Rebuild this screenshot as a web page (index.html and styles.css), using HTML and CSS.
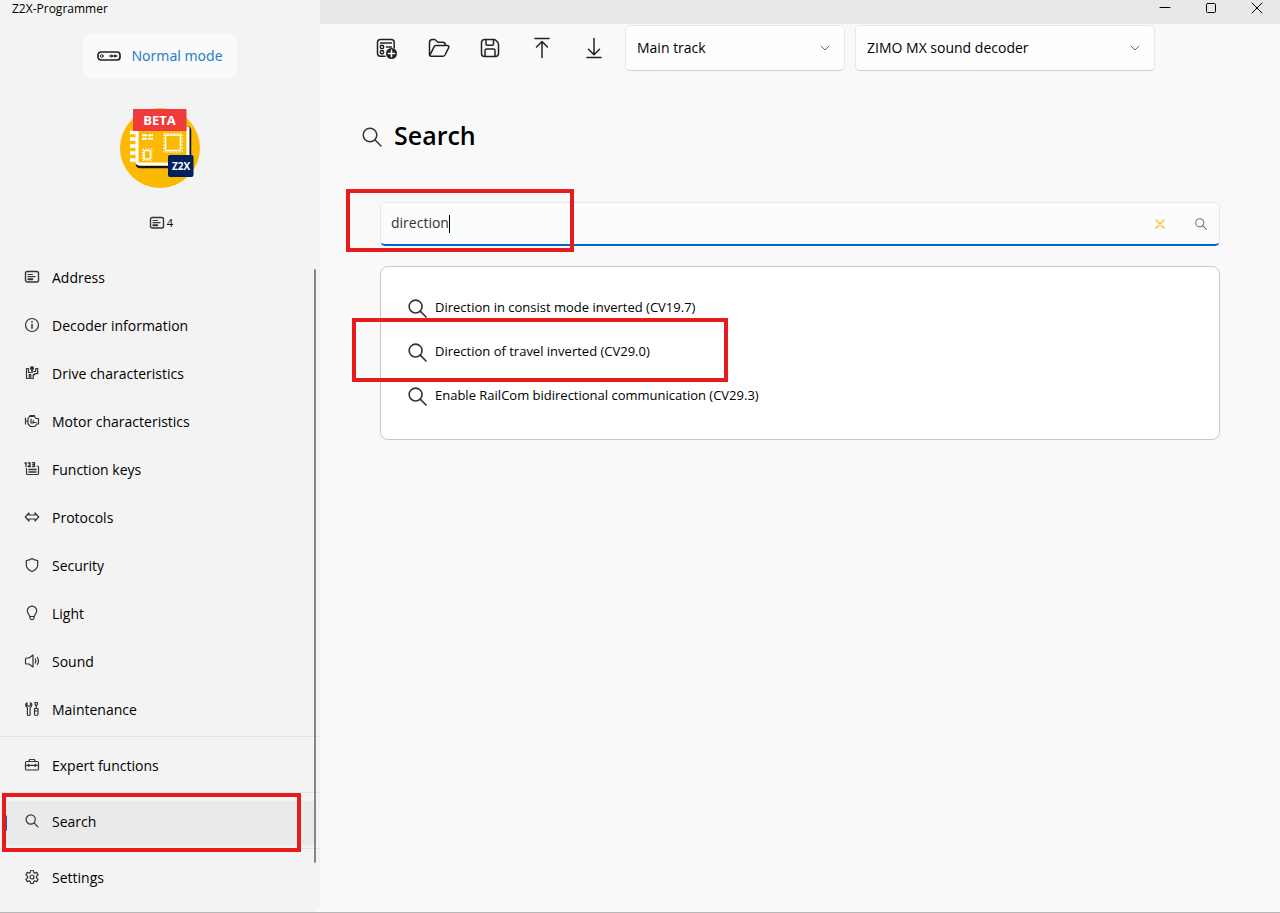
FILE: index.html
```html
<!DOCTYPE html>
<html lang="en">
<head>
<meta charset="utf-8">
<meta name="viewport" content="width=device-width, initial-scale=1">
<title>Z2X-Programmer</title>
<link rel="stylesheet" href="styles.css">
</head>
<body>
<svg class="sprite" aria-hidden="true">
  <symbol id="i-search" viewBox="0 0 20 20"><circle cx="8" cy="8" r="6.8"/><path d="M12.8 12.8 19 19"/></symbol>
  <symbol id="i-card" viewBox="0 0 16 16"><rect x="1.500" y="2.500" width="13" height="10.500" rx="1.800" stroke-width="1.400"/><path d="M4 5.500h4.500M4 7.700h7"/><path d="M4.300 10.300h4" stroke-width="2"/></symbol>
  <symbol id="i-chevron" viewBox="0 0 10 6"><path d="m1 1 4 4 4-4"/></symbol>
</svg>
<div class="app">
  <aside class="sidebar">
    <div class="app-title">Z2X-Programmer</div>
    <button class="mode" type="button">
      <svg class="mode-icon" viewBox="0 0 24 10"><rect x="1" y="1" width="22" height="8" rx="3" stroke-width="1.700"/><circle cx="4.800" cy="5" r="1.400"/><circle cx="14.500" cy="5" r="1"/><circle cx="18.300" cy="5" r="1"/><path d="M12.500 5h7.500"/></svg>
      Normal mode
    </button>
    <svg class="logo" viewBox="0 0 80 80" role="img" aria-label="Z2X beta logo">
      <circle cx="40" cy="40" r="40" fill="#fbba00"/>
      <path d="M17 56.500c0 1.500 1.500 2.500 3 2.500h47c2 0 3-1 3-3V22c0-1.500-.5-2-1.500-2.500" fill="none" stroke="#111" stroke-width="2.500"/>
      <path d="M17 22v31.500a2.500 2.500 0 0 0 2.500 2.500H66a2 2 0 0 0 2-2V20" fill="none" stroke="#fff" stroke-width="3"/>
      <path d="M10 24.500h7M10 31h7M10 38h7M10 45h7M10 52h7" stroke="#fff" stroke-width="3.500" stroke-linecap="butt"/>
      <path d="M22 27.300h11M22 30.800h11" stroke="#fff" stroke-width="2" stroke-dasharray="5 1" stroke-linecap="butt"/>
      <rect x="45.500" y="27" width="15" height="15.500" rx="1" fill="none" stroke="#fff" stroke-width="1.500"/>
      <rect x="44" y="25.500" width="18" height="18.500" fill="none" stroke="#fff" stroke-width="1.500" stroke-dasharray="1.300 1.900" stroke-linecap="butt"/>
      <rect x="24" y="42.500" width="6.500" height="8.500" rx="1" fill="none" stroke="#fff" stroke-width="1.500"/>
      <rect x="22.700" y="41.200" width="9.100" height="11.100" fill="none" stroke="#fff" stroke-width="1.300" stroke-dasharray="1.200 1.600" stroke-linecap="butt"/>
      <rect x="13" y="1" width="53.500" height="22" fill="#ef3c3a"/>
      <rect x="48" y="47" width="25.500" height="22" rx="2" fill="#00215f"/>
      <text class="logo-beta" x="39.500" y="17">BETA</text>
      <text class="logo-z2x" x="61" y="62">Z2X</text>
    </svg>
    <div class="count"><svg class="icon"><use href="#i-card"/></svg>4</div>
    <nav class="nav">
      <a class="item" href="#"><svg class="icon"><use href="#i-card"/></svg>Address</a>
      <a class="item" href="#"><svg class="icon" viewBox="0 0 16 16"><circle cx="8" cy="8" r="6.500"/><path d="M8 7.200v4M8 4.500v.5" stroke-width="1.500"/></svg>Decoder information</a>
      <a class="item" href="#"><svg class="icon" viewBox="0 0 16 16"><path d="M4.500 3.500H2.500v10h2.800v-3.800h1.500v3.800h2.400V9.700h1.500v-1h3V3.500h-2v3H9.500M4.500 3.500v4h2"/><circle cx="8" cy="3.300" r="1.500" fill="currentColor"/><path d="M8 3v4.500" stroke-width="1.500"/></svg>Drive characteristics</a>
      <a class="item" href="#"><svg class="icon" viewBox="0 0 16 16"><path d="M5.500 3.500h5l1.500 2h2.500v5.500H12.700l-1.700 2.500H6.500L4 11V5.500l1.500-2M6 2.500h4.500M1.500 5v6M1.500 8H4M7 6v4h2.200V7.500M9.200 9.500H12"/></svg>Motor characteristics</a>
      <a class="item" href="#"><svg class="icon" viewBox="0 0 16 16"><path d="M2.500 7.500v4.700c0 .8.500 1.300 1.300 1.300h9.400c.8 0 1.300-.5 1.300-1.300V6.500c0-.8-.5-1.500-1.300-1.500"/><path d="M5 8.500h7M5 11h7" stroke-width="1.600"/><path d="m1 2.300 1-.8v4.200M4.200 2h2v1.500L4.200 5.500h2.300M8.500 1.700h2v3.800h-2M8.800 3.500h1.700" stroke-width="1.300"/></svg>Function keys</a>
      <a class="item" href="#"><svg class="icon" viewBox="0 0 16 16"><path d="M5 4 1.300 8 5 12v-2h6v2l3.700-4L11 4v2H5V4Z"/></svg>Protocols</a>
      <a class="item" href="#"><svg class="icon" viewBox="0 0 16 16"><path d="M8 1.500c1.700 1.300 3.500 1.900 5.700 2v4.300c0 3.200-2 5.300-5.700 6.700-3.700-1.400-5.700-3.500-5.700-6.700V3.500c2.200-.1 4-.7 5.700-2Z"/></svg>Security</a>
      <a class="item" href="#"><svg class="icon" viewBox="0 0 16 16"><path d="M5.700 11.200C5.300 9.400 3.300 8.500 3.300 5.800a4.700 4.700 0 0 1 9.400 0c0 2.700-2 3.600-2.400 5.400l-.5 2.500c-.1.500-.4.800-.9.800H7.100c-.5 0-.8-.3-.9-.8l-.5-2.500ZM5.800 11.500h4.400"/></svg>Light</a>
      <a class="item" href="#"><svg class="icon" viewBox="0 0 16 16"><path d="M9 2v12l-4-3H2.500c-.7 0-1-.4-1-1V6c0-.6.300-1 1-1H5l4-3ZM11.300 6c.8 1.300.8 2.700 0 4M13.300 4.500c1.600 2.300 1.600 4.700 0 7"/></svg>Sound</a>
      <a class="item" href="#"><svg class="icon" viewBox="0 0 16 16"><path d="M3 1.800C1.300 2.500 1 5.500 3.400 6.700v6.500c0 1.700 2.700 1.700 2.700 0V6.700C8.600 5.500 8.200 2.500 6.500 1.800v2.700L4.800 5.300 3 4.500V1.800ZM10.500 7.500h3.500v5.500c0 2-3.500 2-3.500 0V7.500ZM12.200 7.500V4.500M11 1.500h2.400V3l-.6 1.500h-1.200L11 3V1.500ZM10.700 10h3"/></svg>Maintenance</a>
      <hr class="rule">
      <a class="item" href="#"><svg class="icon" viewBox="0 0 16 16"><path d="M5.200 4.500V3.300c0-.5.300-.8.800-.8h4c.5 0 .8.300.8.800v1.200M2.800 4.500h10.400c.8 0 1.300.5 1.300 1.300v5.900c0 .8-.5 1.300-1.300 1.300H2.800c-.8 0-1.300-.5-1.300-1.300V5.800c0-.8.500-1.300 1.300-1.300ZM1.500 8.300h13M4.700 7.200v2.300M11.300 7.200v2.300"/></svg>Expert functions</a>
      <hr class="rule">
      <a class="item current" href="#" aria-current="page"><svg class="icon" viewBox="0 0 16 16"><circle cx="6.700" cy="6.500" r="4.600"/><path d="m10 9.800 4 4"/></svg>Search<span class="mark mark-nav"></span></a>
      <hr class="rule">
      <a class="item" href="#"><svg class="icon" viewBox="0 0 16 16"><path d="M6.700 1.500h2.600l.4 2 1.100.6 1.900-.7 1.400 2.300-1.600 1.400v1.800l1.600 1.400-1.400 2.300-1.900-.7-1.100.6-.4 2H6.700l-.4-2-1.100-.6-1.900.7-1.400-2.300 1.600-1.400V7.100L1.900 5.700l1.400-2.300 1.900.7 1.100-.6.400-2Z"/><circle cx="8" cy="8" r="2"/></svg>Settings</a>
      <span class="scrollbar"></span>
    </nav>
  </aside>
  <main class="main">
    <header class="titlebar">
      <button type="button" aria-label="Minimize"><svg viewBox="0 0 12 12"><path d="M1 5.500h10"/></svg></button>
      <button type="button" aria-label="Maximize"><svg viewBox="0 0 12 12"><rect x="1.500" y="1.500" width="9" height="9" rx="1"/></svg></button>
      <button type="button" aria-label="Close"><svg viewBox="0 0 12 12"><path d="m1 1 10 10M11 1 1 11"/></svg></button>
    </header>
    <div class="toolbar">
      <button type="button" aria-label="New"><svg viewBox="0 0 24 24"><path d="M11 20.300H6.500A3 3 0 0 1 3.500 17.500v-11a3 3 0 0 1 3-3h10.700a3 3 0 0 1 3 3V12M6.500 7h11M12.500 11h5"/><circle cx="8" cy="11" r="1.700"/><circle cx="8" cy="16.300" r="1.700"/><circle cx="17.500" cy="17.500" r="5.500" fill="currentColor" stroke="none"/><path d="M17.500 14.300v6.400M14.300 17.500h6.400" stroke="#fff"/></svg></button>
      <button type="button" aria-label="Open"><svg viewBox="0 0 24 24"><path d="M3.500 19V6.500a3 3 0 0 1 3-3h2.300l3.200 2.700h4.700a2.500 2.500 0 0 1 2.500 2.500v.8M3.800 19.500 8 10.800c.4-.8 1-1.300 2-1.300h11.300c1.300 0 2 1.200 1.300 2.300L19 19c-.5.900-1.200 1.300-2.200 1.300H5.500c-1.200 0-2-.5-2-1.500"/></svg></button>
      <button type="button" aria-label="Save"><svg viewBox="0 0 24 24"><path d="M6.500 3.500h9.300c.8 0 1.500.3 2 .8l1.900 1.900c.5.500.8 1.200.8 2v9.300a3 3 0 0 1-3 3h-11a3 3 0 0 1-3-3v-11a3 3 0 0 1 3-3ZM8 3.500V8c0 .7.500 1.200 1.200 1.200h5.100c.7 0 1.200-.5 1.200-1.200V3.500M7 20.500v-6c0-.8.600-1.500 1.500-1.500h7c.9 0 1.500.7 1.500 1.500v6"/></svg></button>
      <button type="button" aria-label="Upload"><svg viewBox="0 0 24 24"><path d="M5 2.500h14M12 21.500V5.800M6.500 11 12 5.500l5.500 5.500"/></svg></button>
      <button type="button" aria-label="Download"><svg viewBox="0 0 24 24"><path d="M5 21.500h14M12 2.500v16M6.500 13.300l5.500 5.500 5.500-5.500"/></svg></button>
      <label class="picker picker-track"><select aria-label="Track"><option>Main track</option></select><svg><use href="#i-chevron"/></svg></label>
      <label class="picker picker-decoder"><select aria-label="Decoder"><option>ZIMO MX sound decoder</option></select><svg><use href="#i-chevron"/></svg></label>
    </div>
    <section class="page">
      <h1 class="heading"><svg><use href="#i-search"/></svg>Search</h1>
      <div class="search">
        <input type="text" aria-label="Search" value="direction"><span class="caret"></span>
        <button class="clear" type="button" aria-label="Clear"><svg viewBox="0 0 10 10"><path d="m1 1 8 8M9 1 1 9"/></svg></button>
        <button class="go" type="button" aria-label="Search"><svg><use href="#i-search"/></svg></button>
        <span class="mark mark-search"></span>
      </div>
      <ul class="results">
        <li><a href="#"><svg><use href="#i-search"/></svg>Direction in consist mode inverted (CV19.7)</a></li>
        <li><a href="#"><svg><use href="#i-search"/></svg>Direction of travel inverted (CV29.0)</a><span class="mark mark-result"></span></li>
        <li><a href="#"><svg><use href="#i-search"/></svg>Enable RailCom bidirectional communication (CV29.3)</a></li>
      </ul>
    </section>
  </main>
</div>
</body>
</html>
```

FILE: styles.css
```css
* { box-sizing: border-box; }

body {
  margin: 0;
  font: 14px/20px "Open Sans", "Noto Sans", sans-serif;
  color: #000;
  background: #f9f9f9;
}

svg {
  fill: none;
  stroke: currentColor;
  stroke-linecap: round;
  stroke-linejoin: round;
}

.sprite { position: absolute; width: 0; height: 0; }

a { color: inherit; text-decoration: none; }

button {
  display: flex;
  align-items: center;
  justify-content: center;
  padding: 0;
  border: 0;
  background: none;
  font: inherit;
  color: inherit;
}

.app {
  display: grid;
  grid-template-columns: 320px 1fr;
  min-height: 100vh;
  border-bottom: 1px solid #b8b8b8;
}

/* Sidebar */
.sidebar {
  display: flex;
  flex-direction: column;
  align-items: center;
  background: #f3f3f3;
  border-bottom-right-radius: 8px;
}

.app-title {
  align-self: flex-start;
  padding-left: 12px;
  font-size: 12px;
  line-height: 18px;
}

.mode {
  gap: 10px;
  margin-top: 16px;
  height: 44px;
  padding: 0 14px;
  border-radius: 8px;
  background: #fafafa;
  font: 14px/20px "Noto Sans", sans-serif;
  color: #1f80cc;
}

.mode-icon { width: 24px; height: 10px; color: #222; }

.logo { width: 80px; height: 80px; margin-top: 30px; stroke: none; }

.logo text { fill: #fff; text-anchor: middle; }
.logo-beta { font: 700 13px "Open Sans", sans-serif; }
.logo-z2x { font: 700 10px "Open Sans", sans-serif; }

.count {
  display: flex;
  align-items: center;
  gap: 2px;
  margin-top: 25px;
  padding-left: 2px;
  font-size: 11px;
}

.icon {
  flex: none;
  width: 16px;
  height: 16px;
  stroke-width: 1.2;
  color: #333;
}

.nav {
  position: relative;
  display: flex;
  flex-direction: column;
  width: 100%;
  margin-top: 20px;
}

.item {
  position: relative;
  display: flex;
  align-items: center;
  gap: 12px;
  height: 44px;
  margin: 4px 4px 0;
  padding: 0 20px 2px;
  border-radius: 4px;
}

.item .icon { margin-bottom: 2px; }

.current { background: #eaeaea; }

.current::before {
  content: "";
  position: absolute;
  left: 0;
  top: 14px;
  width: 3px;
  height: 16px;
  border-radius: 2px;
  background: #0067c0;
}

.rule {
  height: 1px;
  margin: 3px 0 4px;
  border: 0;
  background: #e3e3e3;
}

.scrollbar {
  position: absolute;
  right: 4px;
  top: 16px;
  bottom: 38px;
  width: 2px;
  border-radius: 1px;
  background: #868686;
}

/* Highlight frames */
.mark {
  position: absolute;
  border: 4px solid #e81b1c;
  pointer-events: none;
}
.mark-nav { inset: -8px 15px -7px -2px; }
.mark-search { left: -35px; top: -14px; width: 228px; height: 63px; }
.mark-result { left: -56px; top: -13px; width: 376px; height: 64px; }

/* Main area */
.main { min-width: 0; }

.titlebar {
  display: flex;
  justify-content: flex-end;
  height: 24px;
  padding-bottom: 8px;
  background: #e8e8e8;
}
.titlebar button { width: 46px; }
.titlebar svg { width: 12px; height: 12px; }

.toolbar {
  display: flex;
  align-items: center;
  height: 48px;
  padding: 0 40px;
}
.toolbar button { width: 52px; height: 48px; }
.toolbar button svg { width: 24px; height: 24px; stroke-width: 1.5; color: #222; }

.picker {
  position: relative;
  display: flex;
  height: 46px;
}
.picker-track { flex: 0 1 220px; margin: 0 10px 0 5px; }
.picker-decoder { flex: 0 1 300px; }

.picker select {
  appearance: none;
  width: 100%;
  padding: 0 32px 0 11px;
  border: 1px solid #e8e8e8;
  border-bottom-color: #cfcfcf;
  border-radius: 5px;
  background: #fefefe;
  font: inherit;
  color: #000;
}
.picker svg {
  position: absolute;
  right: 15px;
  top: 20px;
  width: 10px;
  height: 6px;
  color: #666;
  pointer-events: none;
}

.page { padding: 44px 60px; }

.heading {
  display: flex;
  align-items: center;
  gap: 12px;
  margin: 0 0 48px -18px;
  font-size: 25px;
  line-height: 38px;
  font-weight: 600;
}
.heading svg { width: 20px; height: 20px; margin-top: 3px; stroke-width: 1.5; color: #333; }

.search {
  position: relative;
  display: flex;
  align-items: center;
  height: 44px;
  padding-left: 10px;
  border: 1px solid #e8e8e8;
  border-bottom: 2px solid #0067c0;
  border-radius: 5px;
  background: #fbfcfe;
}
.search input {
  field-sizing: content;
  padding: 0 0 2px;
  border: 0;
  outline: 0;
  background: none;
  font: inherit;
  color: #333;
  caret-color: transparent;
}
.caret { width: 1px; height: 18px; background: #000; }
.search button { width: 36px; height: 40px; }
.clear { margin-left: auto; color: #f8c11c; }
.clear svg { width: 10px; height: 10px; stroke-width: 1.4; }
.search .go { margin-left: 5px; color: #777; }
.go svg { width: 12px; height: 12px; stroke-width: 1.8; }

.results {
  margin: 20px 0 0;
  padding: 20px 27px;
  border: 1px solid #c8c8c8;
  border-radius: 8px;
  background: #fff;
  list-style: none;
  font-size: 13px;
}
.results li { position: relative; height: 44px; }
.results a {
  display: flex;
  align-items: center;
  gap: 8px;
  height: 40px;
}
.results svg { width: 19px; height: 19px; margin-top: 3px; stroke-width: 1.7; color: #333; }
```
